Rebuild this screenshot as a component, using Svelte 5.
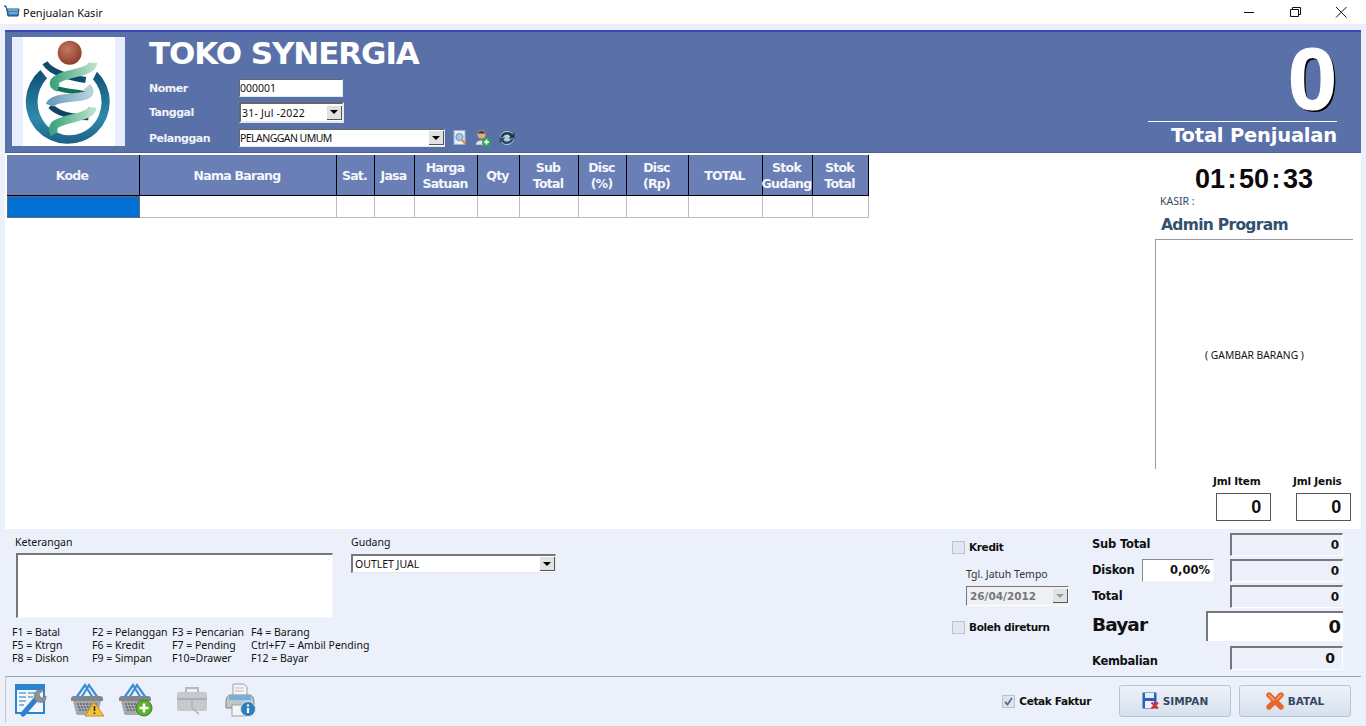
<script>
	const columns = [
		{ label: "Kode", w: 133 },
		{ label: "Nama Barang", w: 197 },
		{ label: "Sat.", w: 38 },
		{ label: "Jasa", w: 40 },
		{ label: "Harga\nSatuan", w: 63 },
		{ label: "Qty", w: 42 },
		{ label: "Sub\nTotal", w: 59 },
		{ label: "Disc\n(%)", w: 48 },
		{ label: "Disc\n(Rp)", w: 62 },
		{ label: "TOTAL", w: 74 },
		{ label: "Stok\nGudang", w: 50 },
		{ label: "Stok\nTotal", w: 56 }
	];
	const gridCols = columns.map((c) => c.w + "px").join(" ");

	const shortcuts = [
		"F1 = Batal", "F2 = Pelanggan", "F3 = Pencarian", "F4 = Barang",
		"F5 = Ktrgn", "F6 = Kredit", "F7 = Pending", "Ctrl+F7 = Ambil Pending",
		"F8 = Diskon", "F9 = Simpan", "F10=Drawer", "F12 = Bayar"
	];
</script>

{#snippet basket()}
	<path d="M5 15 L14 2 L17 7 M10 15 L15 7 M27 15 L18 2 L15 7 M22 15 L17 7" stroke="#3f8fd6" stroke-width="2.2" fill="none" />
	<path d="M3 13 H29 Q32 13 32 16 V18 H0 V16 Q0 13 3 13 Z" fill="#7f878d" />
	<path d="M2 18 H30 L27 30 Q27 32 24 32 H8 Q5 32 5 30 Z" fill="#a3a9ad" />
	<path d="M6 21 H26 M7 24 H25 M8 27 H24" stroke="#60686d" stroke-width="1.5" stroke-dasharray="2 1" />
{/snippet}

<div class="window">
	<div class="titlebar">
		<svg class="app-icon" width="16" height="14" viewBox="0 0 16 14">
			<path d="M0 1 H2 L4 11 H14 L15 4 H3" fill="#3a7fb8" stroke="#1f4f78" />
			<path d="M4 5 H14 M5 8 H14" stroke="#a8d2ee" />
		</svg>
		<span class="app-title">Penjualan Kasir</span>
		<div class="winctl">
			<svg width="46" height="20" viewBox="0 0 46 20"><path d="M18 10.5 H28" stroke="#111" /></svg>
			<svg width="46" height="20" viewBox="0 0 46 20"><path d="M18.5 7.5 H26.5 V14.5 H18.5 Z M20.5 7 V5.5 H28.5 V12.5 H27" fill="none" stroke="#111" /></svg>
			<svg width="46" height="20" viewBox="0 0 46 20"><path d="M18 5 L28.5 15.5 M28.5 5 L18 15.5" stroke="#111" /></svg>
		</div>
	</div>

	<header class="banner">
		<div class="logo">
			<svg width="92" height="109" viewBox="40 21 276 327">
				<defs>
					<radialGradient id="ball" cx="0.4" cy="0.35" r="0.7">
						<stop offset="0" stop-color="#c27a66" />
						<stop offset="1" stop-color="#8c3a28" />
					</radialGradient>
					<linearGradient id="ring" x1="0" y1="0" x2="0" y2="1">
						<stop offset="0" stop-color="#0c4f74" />
						<stop offset="0.65" stop-color="#2f8aac" />
						<stop offset="1" stop-color="#1c5f86" />
					</linearGradient>
					<linearGradient id="green" x1="0" y1="0" x2="1" y2="0">
						<stop offset="0" stop-color="#3fa57e" />
						<stop offset="1" stop-color="#b8dfc9" />
					</linearGradient>
					<linearGradient id="steel" x1="0" y1="0" x2="1" y2="0">
						<stop offset="0" stop-color="#6a9cbc" />
						<stop offset="1" stop-color="#b7d0dc" />
					</linearGradient>
				</defs>
				<path d="M92 120 A126 126 0 1 0 262 125 L250 148 A96 100 0 1 1 112 145 Z" fill="url(#ring)" />
				<path d="M106 98 C125 130 180 142 228 150" stroke="#0f4a6e" stroke-width="18" fill="none" />
				<path d="M135 172 C170 188 215 182 240 196" stroke="#0f7058" stroke-width="14" fill="none" />
				<path d="M122 228 C150 256 200 262 236 262" stroke="#0e4467" stroke-width="17" fill="none" />
				<path d="M250 98 C248 132 160 125 134 155 C130 165 136 170 146 173" stroke="url(#green)" stroke-width="25" fill="none" />
				<path d="M232 170 C246 186 238 194 222 198 C190 206 130 200 120 226" stroke="url(#steel)" stroke-width="25" fill="none" />
				<path d="M248 232 C245 264 165 262 135 285 C128 295 130 305 134 312" stroke="url(#green)" stroke-width="25" fill="none" />
				<circle cx="180" cy="68" r="36" fill="url(#ball)" />
			</svg>
		</div>

		<div class="info">
			<h1>TOKO SYNERGIA</h1>
			<div class="form">
				<div class="row">
					<span class="lbl">Nomer</span>
					<div class="input nomer">000001</div>
				</div>
				<div class="row">
					<span class="lbl">Tanggal</span>
					<div class="input tanggal">31- Jul -2022<span class="arrow"></span></div>
				</div>
				<div class="row">
					<span class="lbl">Pelanggan</span>
					<div class="input pelanggan">PELANGGAN UMUM<span class="arrow"></span></div>
					<div class="mini-icons">
						<svg width="14" height="16" viewBox="0 0 14 16">
							<rect x="1" y="0.5" width="11" height="14" fill="#e6edf6" stroke="#9fb0c4" />
							<circle cx="6.5" cy="7" r="3.6" fill="#a8c8ea" stroke="#6f8fb0" />
							<path d="M9 10 L12.5 14" stroke="#d98a3a" stroke-width="2" />
						</svg>
						<svg width="16" height="17" viewBox="0 0 16 17">
							<circle cx="6.5" cy="4.5" r="4" fill="#d8b078" />
							<path d="M3 3.5 C3 0 10 0 10 3.5 Z" fill="#4a3320" />
							<path d="M0.5 15 C0.5 8.5 12 8.5 12 15 Z" fill="#dfe6ea" stroke="#6f7f70" stroke-width="0.6" />
							<circle cx="11.5" cy="12" r="4.5" fill="#2fa84f" />
							<path d="M9 12 H14 M11.5 9.5 V14.5" stroke="#fff" stroke-width="1.6" />
						</svg>
						<svg width="16" height="16" viewBox="0 0 16 16">
							<circle cx="8" cy="8" r="7" fill="#b8cfe0" />
							<path d="M1.5 7 C3 1 11 0.5 13.5 4.5 L15.5 2.5 V8.5 H9.5 L11.5 6.5 C9.5 3.5 5.5 4 4 7 Z" fill="#1f3448" />
							<path d="M14.5 9 C13 15 5 15.5 2.5 11.5 L0.5 13.5 V7.5 H6.5 L4.5 9.5 C6.5 12.5 10.5 12 12 9 Z" fill="#2c4c68" />
						</svg>
					</div>
				</div>
			</div>
		</div>

		<div class="grand">
			<div class="grand-value">0</div>
			<div class="grand-label">Total Penjualan</div>
		</div>
	</header>

	<section class="main">
		<div class="table-wrap">
			<div class="grid head" style="grid-template-columns: {gridCols}">
				{#each columns as c}
					<div class="th">{c.label}</div>
				{/each}
			</div>
			<div class="grid body" style="grid-template-columns: {gridCols}">
				{#each columns as c, i}
					<div class="td" class:active={i === 0}></div>
				{/each}
			</div>
		</div>

		<aside class="side">
			<div class="clock">01<span class="colon">:</span>50<span class="colon">:</span>33</div>
			<div class="kasir">KASIR :</div>
			<div class="admin">Admin Program</div>
			<div class="picture">( GAMBAR BARANG )</div>
			<div class="counts">
				<div class="count">
					<span>Jml Item</span>
					<div class="count-box">0</div>
				</div>
				<div class="count">
					<span>Jml Jenis</span>
					<div class="count-box">0</div>
				</div>
			</div>
		</aside>
	</section>

	<section class="bottom">
		<div class="notes">
			<div class="notes-label">Keterangan</div>
			<div class="memo"></div>
			<div class="keys">
				{#each shortcuts as s}
					<span>{s}</span>
				{/each}
			</div>
		</div>

		<div class="store">
			<div class="store-label">Gudang</div>
			<div class="input gudang">OUTLET JUAL<span class="arrow"></span></div>
		</div>

		<div class="credit">
			<label class="check"><span class="box"></span>Kredit</label>
			<div class="due-label">Tgl. Jatuh Tempo</div>
			<div class="due">26/04/2012<span class="arrow off"></span></div>
			<label class="check retur"><span class="box"></span>Boleh direturn</label>
		</div>

		<div class="totals">
			<div class="t-row">
				<span class="t-label">Sub Total</span>
				<div class="field">0</div>
			</div>
			<div class="t-row r2">
				<span class="t-label dsk">Diskon</span>
				<div class="disc">0,00%</div>
				<div class="field">0</div>
			</div>
			<div class="t-row">
				<span class="t-label">Total</span>
				<div class="field">0</div>
			</div>
			<div class="t-row">
				<span class="bayar">Bayar</span>
				<div class="pay">0</div>
			</div>
			<div class="t-row r5">
				<span class="t-label kem">Kembalian</span>
				<div class="field big">0</div>
			</div>
		</div>
	</section>

	<footer class="toolbar">
		<div class="tools">
			<svg width="34" height="34" viewBox="0 0 34 34">
				<rect x="1" y="2" width="28" height="28" fill="#f2f7fc" stroke="#2a86cc" stroke-width="2" />
				<rect x="1" y="2" width="28" height="5" fill="#2a86cc" />
				<path d="M4 10 H11 M4 14 H11 M4 18 H11 M4 22 H9 M13 10 H20 M13 14 H18" stroke="#8fb4d4" stroke-width="2" />
				<path d="M8 31 L22 15" stroke="#2f7fd0" stroke-width="5" stroke-linecap="round" />
				<path d="M20 17 C17 10 22 5 29 7 L24 11 L26 15 L31 13 C32 19 26 22 20 17 Z" fill="#8b9297" stroke="#666c70" stroke-width="0.5" />
			</svg>
			<svg width="34" height="34" viewBox="0 0 34 34">
				{@render basket()}
				<path d="M23 19 L33 33 H14 Z" fill="#f2c33c" stroke="#c98a24" />
				<path d="M23.5 23 V28 M23.5 29.5 V31" stroke="#3a2a10" stroke-width="1.6" />
			</svg>
			<svg width="34" height="34" viewBox="0 0 34 34">
				{@render basket()}
				<circle cx="25" cy="25" r="8" fill="#5fae2e" stroke="#3f8a1e" />
				<path d="M20.5 25 H29.5 M25 20.5 V29.5" stroke="#fff" stroke-width="2.6" />
			</svg>
			<svg width="34" height="34" viewBox="0 0 34 34">
				<path d="M11 9 V5 H23 V9" fill="none" stroke="#b4babd" stroke-width="2" />
				<rect x="2" y="9" width="30" height="19" rx="2" fill="#c6cacc" />
				<rect x="2" y="15" width="30" height="2" fill="#aab0b3" />
				<path d="M17 17 V25 L24 31" stroke="#aeb3b5" stroke-width="1.6" fill="none" />
			</svg>
			<svg width="34" height="34" viewBox="0 0 34 34">
				<path d="M10 1 H21 L24 4 V13 H10 Z" fill="#f5f5f5" stroke="#9aa2a6" />
				<path d="M12 5 H21 M12 8 H21" stroke="#b8bec2" />
				<path d="M3 20 C3 14 5 12 8 12 H26 C29 12 31 14 31 20 V25 H3 Z" fill="#bfc6ca" stroke="#7d868a" />
				<rect x="6" y="13" width="22" height="4" fill="#6fb2de" />
				<rect x="9" y="22" width="14" height="11" fill="#f5f5f5" stroke="#9aa2a6" />
				<circle cx="25" cy="26" r="7.5" fill="#2c7fb8" stroke="#d8e4ec" />
				<path d="M25 25 V30 M25 21.5 V23.5" stroke="#fff" stroke-width="2.2" />
			</svg>
		</div>

		<label class="check print"><span class="box on"><svg width="11" height="11" viewBox="0 0 11 11"><path d="M2 6 L4.5 8.5 L9 2" fill="none" stroke="#5c6f90" stroke-width="1.8" /></svg></span>Cetak Faktur</label>

		<button class="btn">
			<svg width="17" height="17" viewBox="0 0 17 17">
				<path d="M0.5 0.5 H14.5 V16.5 H0.5 Z" fill="#2a5fc0" />
				<rect x="3" y="1" width="9" height="5" fill="#e8eef8" />
				<rect x="3" y="9" width="9" height="7" fill="#f2f2f2" />
				<path d="M9.5 10.5 L16 16.5 M16 10.5 L9.5 16.5" stroke="#e02a2a" stroke-width="2.2" />
			</svg>
			SIMPAN
		</button>
		<button class="btn">
			<svg width="18" height="18" viewBox="0 0 18 18">
				<path d="M3 3 L15 15 M15 3 L3 15" stroke="#e8662a" stroke-width="5.4" stroke-linecap="round" />
				<path d="M3 3 L8 8 M15 3 L11 7" stroke="#f7a36a" stroke-width="1.6" stroke-linecap="round" />
			</svg>
			BATAL
		</button>
	</footer>
</div>

<style>
	:global(body) {
		margin: 0;
		overflow: hidden;
	}

	.window {
		width: 1366px;
		height: 726px;
		background: #ebf0fa;
		font-family: "Noto Sans", "DejaVu Sans", sans-serif;
		font-size: 11px;
		color: #111;
		display: flex;
		flex-direction: column;
		overflow: hidden;
	}

	.titlebar {
		flex: 0 0 24px;
		background: #fff;
		display: flex;
		align-items: center;
		padding-left: 4px;
		margin-bottom: 6px;
		font-size: 11px;
	}
	.app-title {
		margin-left: 3px;
	}
	.winctl {
		margin-left: auto;
		margin-right: 2px;
		display: flex;
	}
	.winctl svg {
		display: block;
	}

	.banner {
		flex: 0 0 123px;
		box-sizing: border-box;
		margin: 0 5px;
		background: #5a70a8;
		border-top: 2px solid #3c46b8;
		border-bottom: 1px solid #4a5f94;
		display: flex;
		padding: 5px 24px 0 7px;
	}
	.logo {
		width: 113px;
		height: 109px;
		background: #e8eefb;
		display: flex;
		justify-content: center;
	}
	.logo svg {
		background: #fff;
		display: block;
	}
	.info {
		margin-left: 24px;
	}
	h1 {
		margin: 0;
		font-family: "DejaVu Sans", sans-serif;
		font-size: 31px;
		line-height: 33px;
		font-weight: 700;
		color: #fff;
		letter-spacing: -1.1px;
	}
	.form {
		margin-top: 9px;
	}
	.row {
		display: flex;
		align-items: center;
		height: 18px;
		margin-bottom: 6px;
	}
	.row:nth-child(2) {
		height: 21px;
		margin-top: -1px;
	}
	.row:last-child {
		margin-bottom: 0;
	}
	.lbl {
		width: 90px;
		font-family: "DejaVu Sans", sans-serif;
		font-weight: 700;
		font-size: 11px;
		letter-spacing: -0.5px;
		color: #f0f3fa;
	}
	.input {
		box-sizing: border-box;
		background: #fff;
		font-size: 10.5px;
		display: flex;
		align-items: center;
		padding-left: 0;
		border-top: 1px solid #666;
		border-left: 1px solid #666;
		border-right: 1px solid #e4e8f0;
		border-bottom: 1px solid #e4e8f0;
		white-space: nowrap;
		color: #111;
	}
	.nomer {
		width: 104px;
		height: 18px;
	}
	.tanggal {
		width: 105px;
		height: 21px;
		padding-left: 1px;
		letter-spacing: 0.2px;
		border-top: 2px solid #666;
		border-left: 2px solid #666;
		border-right: 2px solid #e4e8f0;
		border-bottom: 2px solid #e4e8f0;
	}
	.pelanggan {
		width: 206px;
		height: 18px;
		letter-spacing: -0.55px;
	}
	.arrow {
		margin-left: auto;
		flex: 0 0 15px;
		height: 14px;
		background: #e2e2e2;
		border-right: 1px solid #555;
		border-bottom: 1px solid #555;
		box-sizing: border-box;
		display: flex;
		align-items: center;
		justify-content: center;
	}
	.arrow::after {
		content: "";
		border-left: 4px solid transparent;
		border-right: 4px solid transparent;
		border-top: 4px solid #000;
	}
	.arrow.off::after {
		border-top-color: #9a9a9a;
	}
	.mini-icons {
		display: flex;
		align-items: center;
		gap: 8px;
		margin-left: 8px;
	}
	.mini-icons svg {
		display: block;
	}

	.grand {
		margin-left: auto;
		width: 189px;
		text-align: right;
		color: #fff;
	}
	.grand-value {
		font-family: "Liberation Sans", Arial, sans-serif;
		font-weight: 700;
		font-size: 88px;
		line-height: 84px;
		height: 84px;
		border-bottom: 1px solid #fff;
		-webkit-text-stroke: 1.2px #fff;
		text-shadow: 2px 2px 0 #000;
	}
	.grand-label {
		font-family: "DejaVu Sans", sans-serif;
		font-weight: 700;
		font-size: 19.5px;
		line-height: 26px;
		margin-top: 1px;
		letter-spacing: -0.2px;
	}

	.main {
		flex: 0 0 376px;
		margin: 0 5px;
		background: #fff;
		display: flex;
	}
	.table-wrap {
		width: 1150px;
		padding: 2px 0 0 2px;
		box-sizing: border-box;
	}
	.grid {
		display: grid;
	}
	.th {
		height: 41px;
		box-sizing: border-box;
		background: #6a7fb5;
		color: #f4f6fb;
		font-family: "DejaVu Sans", sans-serif;
		font-weight: 700;
		font-size: 12.5px;
		letter-spacing: -0.75px;
		line-height: 16px;
		text-align: center;
		white-space: pre-line;
		display: flex;
		align-items: center;
		justify-content: center;
		padding: 2px 2px 0 0;
		border-right: 1.5px solid #000;
		border-bottom: 1.5px solid #000;
	}
	.td {
		height: 22px;
		box-sizing: border-box;
		border-right: 1px solid #bdbdbd;
		border-bottom: 1px solid #bdbdbd;
	}
	.td.active {
		background: #0070d4;
		border: 1px dotted #c86010;
	}

	.side {
		width: 206px;
		display: flex;
		flex-direction: column;
	}
	.clock {
		font-family: "Liberation Sans", Arial, sans-serif;
		font-weight: 700;
		font-size: 27px;
		line-height: 32px;
		margin-top: 10px;
		margin-left: 40px;
		color: #0a0a0a;
	}
	.colon {
		margin: 0 2.5px;
	}
	.kasir {
		margin: -1px 0 0 5px;
		font-size: 10.5px;
		line-height: 15px;
		color: #34465e;
	}
	.admin {
		margin: 6px 0 0 6px;
		font-family: "DejaVu Sans", sans-serif;
		font-weight: 700;
		font-size: 15.5px;
		letter-spacing: -0.7px;
		line-height: 20px;
		color: #34506f;
	}
	.picture {
		margin-top: 4px;
		width: 198px;
		height: 230px;
		box-sizing: border-box;
		border-top: 1px solid #999;
		border-left: 1px solid #999;
		display: flex;
		align-items: center;
		justify-content: center;
		font-size: 10.3px;
		padding-top: 1px;
	}
	.counts {
		display: flex;
		justify-content: flex-end;
		gap: 25px;
		margin-top: 5px;
		margin-right: 10px;
	}
	.count {
		width: 55px;
		display: flex;
		flex-direction: column;
		font-family: "DejaVu Sans", sans-serif;
		font-weight: 700;
		font-size: 10.5px;
		letter-spacing: -0.2px;
	}
	.count span {
		line-height: 14px;
		margin: 0 0 5px -3px;
		white-space: nowrap;
	}
	.count-box {
		box-sizing: border-box;
		width: 55px;
		height: 28px;
		border: 1px solid #555;
		text-align: right;
		padding-right: 9px;
		font-family: "Liberation Sans", Arial, sans-serif;
		font-size: 18px;
		line-height: 26px;
	}

	.bottom {
		flex: 0 0 147px;
		margin: 0 5px;
		display: flex;
	}
	.notes {
		width: 346px;
		padding-left: 7px;
		box-sizing: border-box;
	}
	.notes-label {
		margin: 6px 0 0 3px;
		line-height: 15px;
		font-size: 10.5px;
	}
	.memo {
		width: 317px;
		height: 65px;
		box-sizing: border-box;
		margin: 3px 0 0 4px;
		background: #fff;
		border-top: 2px solid #777;
		border-left: 2px solid #777;
		border-right: 1px solid #f4f6fb;
		border-bottom: 1px solid #f4f6fb;
	}
	.keys {
		margin-top: 8px;
		display: grid;
		grid-template-columns: 80px 80px 79px auto;
		line-height: 13px;
		font-size: 10.5px;
		white-space: nowrap;
	}
	.store {
		width: 205px;
		margin-right: 396px;
	}
	.store-label {
		margin-top: 6px;
		line-height: 15px;
		font-size: 10.5px;
	}
	.gudang {
		margin-top: 4px;
		height: 19px;
		padding-left: 2px;
		border-top: 2px solid #777;
		border-left: 2px solid #777;
	}
	.credit {
		width: 140px;
		padding-top: 12px;
		box-sizing: border-box;
	}
	.check {
		display: flex;
		align-items: center;
		font-family: "DejaVu Sans", sans-serif;
		font-weight: 700;
		font-size: 10.5px;
		letter-spacing: -0.35px;
		line-height: 13px;
		gap: 4px;
	}
	.box {
		width: 13px;
		height: 13px;
		box-sizing: border-box;
		background: #e2e6ee;
		border: 1px solid #b4c4d8;
		display: flex;
		align-items: center;
		justify-content: center;
	}
	.due-label {
		margin: 13px 0 0 14px;
		line-height: 15px;
		font-size: 10.5px;
		color: #333;
	}
	.due {
		margin: 4px 0 0 14px;
		width: 103px;
		height: 20px;
		box-sizing: border-box;
		display: flex;
		align-items: center;
		padding-left: 3px;
		font-family: "DejaVu Sans", sans-serif;
		font-weight: 700;
		font-size: 10.5px;
		color: #777;
		background: #eef0f4;
		border-top: 1px solid #777;
		border-left: 1px solid #777;
		border-right: 1px solid #fff;
		border-bottom: 1px solid #fff;
	}
	.retur {
		margin-top: 15px;
	}
	.totals {
		width: 251px;
		padding-top: 4px;
	}
	.t-row {
		display: flex;
		align-items: flex-start;
		justify-content: space-between;
		margin-bottom: 3px;
	}
	.t-label {
		font-family: "DejaVu Sans", sans-serif;
		font-weight: 700;
		font-size: 11.5px;
		letter-spacing: -0.2px;
		line-height: 15px;
		margin-top: 4px;
	}
	.dsk {
		width: 50px;
	}
	.kem {
		margin-top: 8px;
		letter-spacing: -0.3px;
	}
	.r2 {
		justify-content: flex-start;
	}
	.r2 .field {
		margin-left: 16px;
	}
	.field {
		width: 113px;
		height: 23px;
		box-sizing: border-box;
		background: #ebf0fa;
		border-top: 2px solid #777;
		border-left: 2px solid #777;
		border-right: 1px solid #fff;
		border-bottom: 1px solid #fff;
		text-align: right;
		padding-right: 3px;
		font-family: "DejaVu Sans", sans-serif;
		font-weight: 700;
		font-size: 12px;
		line-height: 21px;
	}
	.r5 {
		margin-top: 5px;
	}
	.field.big {
		height: 24px;
		font-size: 14px;
		padding-right: 7px;
	}
	.disc {
		width: 72px;
		height: 23px;
		box-sizing: border-box;
		background: #fff;
		border: 1px solid #f4f6fb;
		border-top: 1px solid #888;
		border-left: 1px solid #888;
		text-align: right;
		padding-right: 3px;
		font-family: "DejaVu Sans", sans-serif;
		font-weight: 700;
		font-size: 11.5px;
		line-height: 21px;
	}
	.bayar {
		font-family: "DejaVu Sans", sans-serif;
		font-weight: 700;
		font-size: 18.5px;
		letter-spacing: -0.9px;
		line-height: 26px;
		margin-top: 1px;
	}
	.pay {
		width: 137px;
		height: 30px;
		box-sizing: border-box;
		background: #fff;
		border-top: 2px solid #777;
		border-left: 2px solid #777;
		text-align: right;
		padding-right: 2px;
		font-family: "DejaVu Sans", sans-serif;
		font-weight: 700;
		font-size: 18px;
		line-height: 28px;
	}

	.toolbar {
		flex: 0 0 47px;
		box-sizing: border-box;
		margin: 0 5px;
		border-top: 1px solid #9ea4ae;
		border-left: 1px solid #c4c8d0;
		border-bottom: 1px solid #f4f6fb;
		display: flex;
		align-items: center;
		padding-right: 10px;
	}
	.tools {
		display: flex;
		margin-left: 9px;
	}
	.tools svg {
		display: block;
	}
	.tools svg:nth-child(2),
	.tools svg:nth-child(4) {
		margin-left: 22px;
	}
	.tools svg:nth-child(3),
	.tools svg:nth-child(5) {
		margin-left: 14px;
	}
	.print {
		margin-left: auto;
		margin-right: 28px;
		margin-top: 4px;
	}
	.box.on {
		background: #dfe4ec;
	}
	.btn {
		width: 112px;
		height: 32px;
		margin-top: 2px;
		box-sizing: border-box;
		border: 1px solid #b7c4d6;
		border-radius: 3px;
		background: linear-gradient(#edf2f9, #d6e0ee);
		display: flex;
		align-items: center;
		justify-content: center;
		gap: 4px;
		font-family: "DejaVu Sans", sans-serif;
		font-weight: 700;
		font-size: 10.5px;
		color: #34465e;
		padding: 0;
	}
	.btn + .btn {
		margin-left: 8px;
	}
</style>
